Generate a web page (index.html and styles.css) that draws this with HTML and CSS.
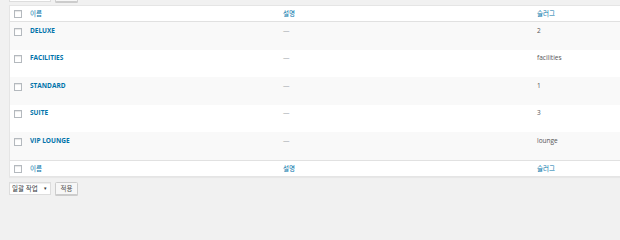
FILE: index.html
```html
<!DOCTYPE html>
<html lang="ko">
<head>
<meta charset="utf-8">
<link rel="stylesheet" href="styles.css">
</head>
<body>
<div class="wrap">
  <div class="tablenav tablenav-top">
    <div class="bulk-select"></div>
    <div class="apply-btn"></div>
  </div>
  <table class="list-table">
    <colgroup>
      <col class="col-cb">
      <col class="col-name">
      <col class="col-desc">
      <col class="col-slug">
    </colgroup>
    <thead>
      <tr>
        <td class="cb-cell"><span class="check"></span></td>
        <th class="head-cell"><span class="sort-link">이름</span></th>
        <th class="head-cell"><span class="sort-link">설명</span></th>
        <th class="head-cell"><span class="sort-link">슬러그</span></th>
      </tr>
    </thead>
    <tbody>
      <tr class="row alt">
        <td class="cb-cell"><span class="check"></span></td>
        <td class="cell"><span class="row-title">DELUXE</span></td>
        <td class="cell"><span class="dash">—</span></td>
        <td class="cell"><span class="slug">2</span></td>
      </tr>
      <tr class="row">
        <td class="cb-cell"><span class="check"></span></td>
        <td class="cell"><span class="row-title">FACILITIES</span></td>
        <td class="cell"><span class="dash">—</span></td>
        <td class="cell"><span class="slug">facilities</span></td>
      </tr>
      <tr class="row alt">
        <td class="cb-cell"><span class="check"></span></td>
        <td class="cell"><span class="row-title">STANDARD</span></td>
        <td class="cell"><span class="dash">—</span></td>
        <td class="cell"><span class="slug">1</span></td>
      </tr>
      <tr class="row">
        <td class="cb-cell"><span class="check"></span></td>
        <td class="cell"><span class="row-title">SUITE</span></td>
        <td class="cell"><span class="dash">—</span></td>
        <td class="cell"><span class="slug">3</span></td>
      </tr>
      <tr class="row alt">
        <td class="cb-cell"><span class="check"></span></td>
        <td class="cell"><span class="row-title">VIP LOUNGE</span></td>
        <td class="cell"><span class="dash">—</span></td>
        <td class="cell"><span class="slug">lounge</span></td>
      </tr>
    </tbody>
    <tfoot>
      <tr>
        <td class="cb-cell"><span class="check"></span></td>
        <th class="head-cell"><span class="sort-link">이름</span></th>
        <th class="head-cell"><span class="sort-link">설명</span></th>
        <th class="head-cell"><span class="sort-link">슬러그</span></th>
      </tr>
    </tfoot>
  </table>
  <div class="tablenav tablenav-bottom">
    <div class="bulk-select"><span class="bulk-label">일괄 작업</span><span class="caret">▾</span></div>
    <div class="apply-btn">적용</div>
  </div>
</div>
</body>
</html>
```

FILE: styles.css
```css
html, body {
  margin: 0;
  padding: 0;
  width: 620px;
  height: 200px;
  overflow: hidden;
}
body {
  background: #f1f1f1;
  font-family: "Open Sans", "Noto Sans CJK KR", sans-serif;
  font-size: 6.5px;
  line-height: 9px;
  color: #444;
}
.wrap {
  margin-left: 9px;
  width: 611px;
  height: 200px;
  overflow: hidden;
}
.tablenav {
  display: flex;
  gap: 4px;
  height: 13px;
}
.tablenav-top {
  margin-top: -11px;
  margin-bottom: 3px;
}
.tablenav-bottom {
  margin-top: 5px;
}
.bulk-select {
  box-sizing: border-box;
  width: 42px;
  height: 13px;
  background: #fff;
  border: 1px solid #ddd;
  box-shadow: inset 0 1px 1px rgba(0,0,0,.07);
  display: flex;
  align-items: center;
  justify-content: space-between;
  padding: 0 3px 0 2px;
  color: #32373c;
  font-size: 6.5px;
}
.caret {
  font-size: 5px;
  color: #333;
}
.apply-btn {
  box-sizing: border-box;
  width: 23px;
  height: 13px;
  background: #f7f7f7;
  border: 1px solid #ccc;
  border-radius: 1.5px;
  box-shadow: 0 1px 0 #ccc;
  display: flex;
  align-items: center;
  justify-content: center;
  color: #555;
  font-size: 6.5px;
}
.list-table {
  table-layout: fixed;
  width: 779px;
  border-collapse: separate;
  border-spacing: 0;
  background: #fff;
  border: 1px solid #e5e5e5;
  box-shadow: 0 1px 1px rgba(0,0,0,.04);
}
.col-cb { width: 16px; }
.col-name { width: 253px; }
.col-desc { width: 254px; }
.col-slug { width: 254px; }

.cb-cell {
  padding: 0 0 0 4px;
  vertical-align: top;
}
.check {
  display: block;
  box-sizing: border-box;
  width: 8px;
  height: 8px;
  background: #fff;
  border: 1px solid #b4b9be;
  box-shadow: inset 0 1px 1px rgba(0,0,0,.1);
}
thead .cb-cell, tfoot .cb-cell {
  height: 15px;
}
thead .check, tfoot .check {
  margin-top: 4px;
}
thead td, thead th {
  border-bottom: 1px solid #e1e1e1;
}
tfoot td, tfoot th {
  border-top: 1px solid #e1e1e1;
}
.head-cell {
  text-align: left;
  font-weight: 400;
  padding: 3px 4px;
  height: 9px;
  vertical-align: top;
}
.sort-link {
  color: #0073aa;
}
.row {
  height: 27.5px;
}
.row.alt {
  background: #f9f9f9;
}
.row .check {
  margin-top: 5.5px;
}
.cell {
  padding: 3.5px 4px 0;
  vertical-align: top;
}
.row-title {
  color: #0073aa;
  font-weight: 700;
}
.dash {
  color: #a0a5aa;
}
.slug {
  color: #555;
}
```
